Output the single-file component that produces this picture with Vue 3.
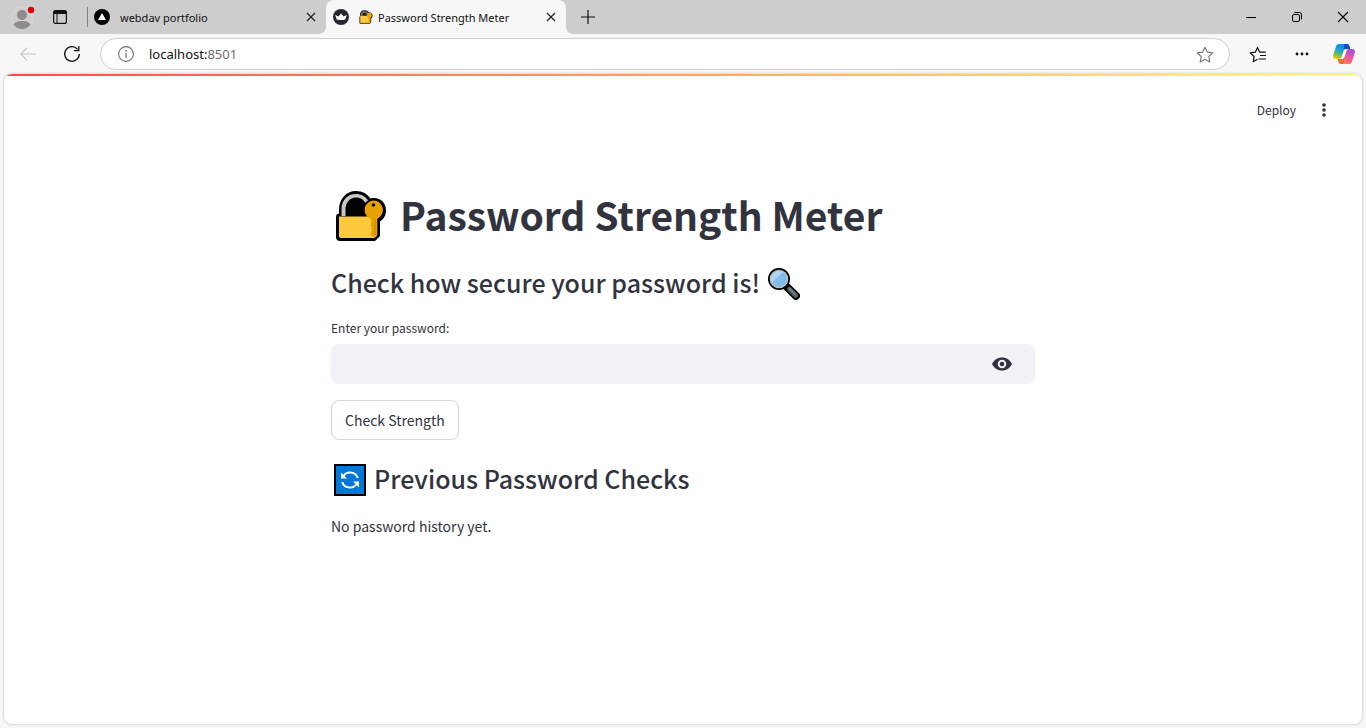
<script setup>
import { ref } from 'vue'

const password = ref('')
const visible = ref(false)
</script>

<template>
  <div class="browser">
    <header class="tabstrip">
      <button class="plain profile" aria-label="Profile">
        <svg width="28" height="28" viewBox="0 0 28 28">
          <circle cx="13" cy="15" r="10.5" fill="#d0cecc" stroke="#dedcda" />
          <circle cx="13" cy="12" r="5" fill="#8f8b88" />
          <path d="M4.500 21.500Q6 18 13 18T21.500 21.500Q18 26 13 26T4.500 21.500Z" fill="#8f8b88" />
          <circle cx="22" cy="7" r="3.200" fill="#e3000b" />
        </svg>
      </button>
      <button class="plain actions" aria-label="Tab actions">
        <svg width="16" height="16" viewBox="0 0 16 16">
          <rect x="1.600" y="1.600" width="12.800" height="12.800" rx="2" fill="none" stroke="#111" stroke-width="1.200" />
          <path d="M1.500 3.200a2 2 0 0 1 2-2h9a2 2 0 0 1 2 2V5h-13zM4.500 5h1v9h-1z" fill="#111" />
        </svg>
      </button>
      <span class="divider"></span>
      <div class="tab">
        <svg width="16" height="16" viewBox="0 0 16 16">
          <circle cx="8" cy="8" r="8" fill="#000" />
          <path d="M8 4l4 7H4z" fill="#fff" />
        </svg>
        <span class="tab-title">webdav portfolio</span>
        <button class="plain close" aria-label="Close webdav portfolio">
          <svg width="10" height="10" viewBox="0 0 10 10"><path d="M1 1l8 8M9 1L1 9" stroke="#222" stroke-width="1.200" /></svg>
        </button>
      </div>
      <div class="tab active">
        <svg width="16" height="16" viewBox="0 0 16 16">
          <circle cx="8" cy="8" r="8" fill="#262730" />
          <path d="M2.200 6l3.200 1.600L8 4.500l2.600 3.100L13.800 6l-1.600 4.500q-4.200 1-8.400 0z" fill="#fff" />
        </svg>
        <span class="tab-title">
          <svg width="14" height="14" viewBox="0 0 50 51">
            <path d="M3 23V18C3 7 9 1 18 1h4c6 0 11 3 13 7 8 0 14 5 14 12 0 5-2 9-5 11v14l-5 5H4l-3-3V25z" fill="#222" />
            <path d="M7 23V18C7 9 12 5 20 5s13 4 13 13v5h-5v-5c0-5-3-8-8-8s-8 3-8 8v5z" fill="#777" />
            <path d="M4 21h36v26H4z" fill="#ffc83d" />
            <path d="M37 10c6 0 9 4 9 9 0 4-2 7-5 9v14l-4 4-4-4V28c-3-2-5-5-5-9 0-5 4-9 9-9z" fill="#f0a000" />
          </svg>
          Password Strength Meter
        </span>
        <button class="plain close" aria-label="Close Password Strength Meter">
          <svg width="10" height="10" viewBox="0 0 10 10"><path d="M1 1l8 8M9 1L1 9" stroke="#222" stroke-width="1.200" /></svg>
        </button>
      </div>
      <button class="plain new-tab" aria-label="New tab">
        <svg width="14" height="14" viewBox="0 0 14 14"><path d="M7 0v14M0 7h14" stroke="#111" stroke-width="1.200" /></svg>
      </button>
      <div class="window-controls">
        <button class="plain" aria-label="Minimize">
          <svg width="12" height="12" viewBox="0 0 12 12"><path d="M1 6.500h10" stroke="#000" /></svg>
        </button>
        <button class="plain" aria-label="Restore">
          <svg width="12" height="12" viewBox="0 0 12 12" fill="none" stroke="#000">
            <rect x="1.500" y="3.500" width="7" height="7" rx="1.500" />
            <path d="M3.500 1.500H8.500a2 2 0 0 1 2 2V8.500" />
          </svg>
        </button>
        <button class="plain" aria-label="Close window">
          <svg width="12" height="12" viewBox="0 0 12 12"><path d="M1 1l10 10M11 1L1 11" stroke="#000" stroke-width="1.100" /></svg>
        </button>
      </div>
    </header>

    <nav class="toolbar">
      <button class="plain back" aria-label="Back" disabled>
        <svg width="16" height="14" viewBox="0 0 16 14"><path d="M7 .700L.900 7 7 13.300M1 7h15" fill="none" stroke="#c4c4c4" stroke-width="1.200" /></svg>
      </button>
      <button class="plain reload" aria-label="Reload">
        <svg width="18" height="18" viewBox="0 0 18 18" fill="none" stroke="#111" stroke-width="1.300">
          <path d="M16.300 9A7.300 7.300 0 1 1 14.600 4.300M15.800 1v4.700h-4.900" />
        </svg>
      </button>
      <div class="address">
        <svg width="16" height="16" viewBox="0 0 16 16">
          <circle cx="8" cy="8" r="7.400" fill="none" stroke="#707070" stroke-width="1.100" />
          <path d="M8 7v5" stroke="#707070" stroke-width="1.200" />
          <circle cx="8" cy="4.800" r=".9" fill="#707070" />
        </svg>
        <span class="url">localhost:<span class="port">8501</span></span>
        <button class="plain" aria-label="Add to favorites">
          <svg width="18" height="17" viewBox="0 0 18 17"><path d="M9 1.200l2.300 4.900 5.400.700-3.900 3.700 1 5.400L9 13.300l-4.800 2.600 1-5.400L1.300 6.800l5.400-.7z" fill="none" stroke="#747474" stroke-width="1.100" stroke-linejoin="round" /></svg>
        </button>
      </div>
      <button class="plain favorites" aria-label="Favorites">
        <svg width="18" height="17" viewBox="0 0 18 17" fill="none" stroke="#111" stroke-width="1.200" stroke-linejoin="round">
          <path d="M8.500 13.300l-4.300 2.500.900-5.300L1.200 6.900l5.100-.7L8.500 1.400l2.200 4.800h6M11 9.500h6M9.500 13h7.500" />
        </svg>
      </button>
      <button class="plain more" aria-label="Settings and more">
        <svg width="14" height="4" viewBox="0 0 14 4" fill="#111"><circle cx="2" cy="2" r="1.400" /><circle cx="7" cy="2" r="1.400" /><circle cx="12" cy="2" r="1.400" /></svg>
      </button>
      <button class="plain copilot" aria-label="Copilot">
        <svg width="22" height="20" viewBox="0 0 22 20">
          <defs>
            <linearGradient id="cool" x1=".6" y1="0" x2=".2" y2="1"><stop offset="0" stop-color="#1b7fe0" /><stop offset=".4" stop-color="#16a0d8" /><stop offset=".7" stop-color="#63bd58" /><stop offset="1" stop-color="#f5cf00" /></linearGradient>
            <linearGradient id="warm" x1=".8" y1="0" x2=".2" y2="1"><stop offset="0" stop-color="#a14be8" /><stop offset=".5" stop-color="#f0589a" /><stop offset="1" stop-color="#ff8b45" /></linearGradient>
          </defs>
          <path d="M9 8l4.500-4L13 12l-4.500 4z" fill="#fff" />
          <path d="M6.500 0H14c1.500 0 2 .9 2.500 2.500L17.200 5H13c-1.500 0-2 .5-2.500 2L8.500 13c-.5 1.500-1.500 2-3 2H2.800C.5 15-.3 13 .3 11L3 2.600C3.600.8 4.700 0 6.500 0z" fill="url(#cool)" />
          <path d="M12 0h2c1.500 0 2 .9 2.500 2.500L17.200 5H13c-1.200 0-1.800.3-2.200 1.200L11 3c.2-1.500.3-2.500 1-3z" fill="#1749b8" />
          <path d="M15.500 20H8c-1.500 0-2-.9-2.500-2.500L4.800 15H9c1.500 0 2-.5 2.500-2l2-6c.5-1.500 1.500-2 3-2h2.700c2.300 0 3.100 2 2.500 4L19 17.400c-.6 1.800-1.700 2.600-3.500 2.600z" fill="url(#warm)" />
          <path d="M10 20H8c-1.500 0-2-.9-2.500-2.500L4.800 15H9c1.200 0 1.800-.3 2.200-1.200L11 17c-.2 1.500-.3 2.500-1 3z" fill="#f36a35" />
        </svg>
      </button>
    </nav>

    <div class="viewport">
      <div class="app">
        <div class="decoration"></div>
        <div class="app-header">
          <button class="plain deploy">Deploy</button>
          <button class="plain menu" aria-label="Main menu">
            <svg width="4" height="14" viewBox="0 0 4 14" fill="#31333f"><circle cx="2" cy="2" r="1.800" /><circle cx="2" cy="7" r="1.800" /><circle cx="2" cy="12" r="1.800" /></svg>
          </button>
        </div>
        <main class="content">
          <h1>
            <svg width="50" height="51" viewBox="0 0 50 51">
              <path d="M3 22.500V19C3 8 10 0 20 0c6.500 0 11.500 3 14.500 7.500C43.500 5.500 50 11.500 50 19.500c0 5-2.500 9-6 10.800V45l-5 5H4c-2.500 0-4-1.500-4-4V26c0-2 1-3.200 3-3.500z" fill="#000" />
              <path d="M5.500 25V18.500C5.500 9 11.500 3 20 3c5.500 0 9.500 2.500 12 6.500l-2.800 2.300C27 8 24 6.500 20 6.500c-6.300 0-10.500 5-10.500 12V25z" fill="#c7c7c7" />
              <path d="M3 25.500h38v19L38.500 47H4.500L3 45.500z" fill="#ffc83d" />
              <path d="M37.500 9.500a9.500 9.500 0 0 1 3.800 18.200V44l-3.500 2.500-3-2.500V41l1.500-1.500-1.500-1.500 1.500-1.500-1.500-1.500V27.900A9.500 9.500 0 0 1 37.500 9.500z" fill="#e8a200" />
              <path d="M39 28v16" stroke="#d28b00" stroke-width="1.300" />
              <circle cx="37.500" cy="14" r="1.800" fill="#000" />
            </svg>
            <span>Password Strength Meter</span>
          </h1>
          <h3 class="question">
            <span>Check how secure your password is!</span>
            <svg width="32" height="32" viewBox="0 0 32 32">
              <path d="M18.500 18.500l9.500 9.300" stroke="#000" stroke-width="8" stroke-linecap="round" />
              <circle cx="11" cy="11" r="11" fill="#000" />
              <circle cx="11" cy="11" r="9.300" fill="#b9c1c5" />
              <circle cx="11" cy="11" r="7.800" fill="#82bbe9" />
              <path d="M4 14.500A7.800 7.800 0 0 1 15 4.300z" fill="#aed4f3" />
              <path d="M21.500 21.300l6.200 6.200" stroke="#515c61" stroke-width="4.800" stroke-linecap="round" />
              <path d="M21.500 20.500l5.800 5.700" stroke="#7d898e" stroke-width="1.600" stroke-linecap="round" />
            </svg>
          </h3>
          <label for="password">Enter your password:</label>
          <div class="field">
            <input id="password" v-model="password" :type="visible ? 'text' : 'password'" />
            <button class="plain" aria-label="Show password text" @click="visible = !visible">
              <svg width="20" height="14" viewBox="0 0 20 14">
                <path fill-rule="evenodd" d="M10 .5C5.500.5 1.700 3.200 0 7c1.700 3.800 5.500 6.500 10 6.500S18.300 10.800 20 7C18.300 3.200 14.500.5 10 .5zM10 2.700a4.300 4.300 0 1 1 0 8.600 4.300 4.300 0 0 1 0-8.600z" fill="#31333f" />
                <circle cx="10" cy="7" r="2.300" fill="#31333f" />
              </svg>
            </button>
          </div>
          <button class="check">Check Strength</button>
          <h3 class="history">
            <svg width="32" height="32" viewBox="0 0 32 32">
              <path d="M0 0h32v32H0z" fill="#000" />
              <path d="M2 2h28v28H2z" fill="#0078d7" />
              <path d="M8.700 13.500A8 8 0 0 1 23.800 14M23.300 18.500A8 8 0 0 1 8.200 18" fill="none" stroke="#fff" stroke-width="2" />
              <path d="M7 8.500v6h6zM25 23.500v-6h-6z" fill="#fff" />
            </svg>
            <span>Previous Password Checks</span>
          </h3>
          <p>No password history yet.</p>
        </main>
      </div>
    </div>
  </div>
</template>

<style>
body {
  background: #f7f7f7;
}
</style>

<style scoped>
* {
  box-sizing: border-box;
}
svg {
  display: block;
  flex: none;
}
.browser {
  display: flex;
  flex-direction: column;
  min-height: 100vh;
  background: #f7f7f7;
  font-family: "Noto Sans", "Open Sans", sans-serif;
  color: #111;
}
.plain {
  display: flex;
  align-items: center;
  justify-content: center;
  padding: 0;
  border: 0;
  background: none;
  color: inherit;
  font: inherit;
}
.tabstrip {
  display: flex;
  align-items: center;
  height: 34px;
  background: #cdcdcd;
  font-size: 11px;
}
.profile {
  width: 36px;
  margin-left: 5px;
}
.actions {
  width: 38px;
}
.divider {
  width: 1px;
  height: 20px;
  margin-left: 8px;
  background: #808080;
}
.tab {
  display: flex;
  align-items: center;
  gap: 10px;
  width: 238px;
  height: 34px;
  padding: 0 10px 0 6px;
}
.tab.active {
  position: relative;
  width: 240px;
  padding-left: 7px;
  border-radius: 8px 8px 0 0;
  background: #f7f7f7;
}
.tab.active::before,
.tab.active::after {
  content: "";
  position: absolute;
  bottom: 0;
  width: 8px;
  height: 8px;
}
.tab.active::before {
  right: 100%;
  background: radial-gradient(circle at 0 0, #cdcdcd 8px, #f7f7f7 8px);
}
.tab.active::after {
  left: 100%;
  background: radial-gradient(circle at 100% 0, #cdcdcd 8px, #f7f7f7 8px);
}
.tab-title {
  display: flex;
  align-items: center;
  gap: 5px;
  flex: 1;
  white-space: nowrap;
}
.close {
  width: 10px;
  height: 16px;
}
.new-tab {
  width: 14px;
  margin-left: 15px;
}
.window-controls {
  display: flex;
  margin-left: auto;
}
.window-controls button {
  width: 46px;
  height: 34px;
}
.toolbar {
  display: flex;
  align-items: center;
  height: 40px;
  padding: 0 11px 0 20px;
}
.reload {
  margin: 0 19px 0 27px;
}
.address {
  display: flex;
  flex: 1;
  align-items: center;
  gap: 15px;
  height: 32px;
  padding: 0 15px 0 17px;
  border: 1px solid #cfcfcf;
  border-radius: 16px;
  background: #fff;
}
.url {
  flex: 1;
  font-size: 13px;
}
.port {
  color: #6c6c6c;
}
.favorites {
  margin-left: 19px;
}
.more {
  margin-left: 28px;
}
.copilot {
  margin-left: 24px;
}
.viewport {
  display: flex;
  flex: 1;
  padding: 0 4px 4px;
}
.app {
  flex: 1;
  overflow: hidden;
  border-radius: 8px;
  background: #fff;
  box-shadow: 0 0 3px rgba(0, 0, 0, 0.25);
  font-family: "Noto Sans CJK SC", "Open Sans", sans-serif;
  color: #31333f;
}
.decoration {
  height: 2px;
  background: linear-gradient(90deg, #ff4b4b, #fffd80);
}
.app-header {
  display: flex;
  align-items: center;
  justify-content: flex-end;
  height: 68px;
  padding-right: 36px;
  font-size: 12px;
}
.deploy {
  padding-bottom: 2px;
}
.menu {
  margin-left: 26px;
}
.content {
  max-width: 704px;
  margin: 0 auto;
  padding-top: 37px;
}
h1,
h3 {
  display: flex;
  align-items: center;
  margin: 0;
  white-space: nowrap;
}
h1 span,
h3 span {
  padding-bottom: 4px;
}
h1 {
  gap: 14px;
  height: 70px;
  padding-left: 5px;
  font-size: 39px;
  font-weight: 700;
}
h3 {
  height: 66px;
  font-size: 25px;
  font-weight: 500;
}
.question {
  gap: 8px;
}
.history {
  gap: 8px;
  margin-top: 7px;
  padding-left: 3px;
}
label {
  display: block;
  height: 27px;
  font-size: 12px;
  line-height: 22px;
}
.field {
  display: flex;
  height: 40px;
  padding-right: 23px;
  border-radius: 8px;
  background: #f0f2f6;
}
.field input {
  flex: 1;
  min-width: 0;
  padding: 0 12px;
  border: 0;
  outline: 0;
  background: none;
  color: inherit;
  font: inherit;
  font-size: 14px;
}
.check {
  height: 40px;
  margin-top: 16px;
  padding: 0 13px;
  border: 1px solid #d6d6d9;
  border-radius: 8px;
  background: #fff;
  color: inherit;
  font: inherit;
  font-size: 14px;
}
p {
  margin: 0;
  font-size: 14px;
  line-height: 26px;
}
</style>
